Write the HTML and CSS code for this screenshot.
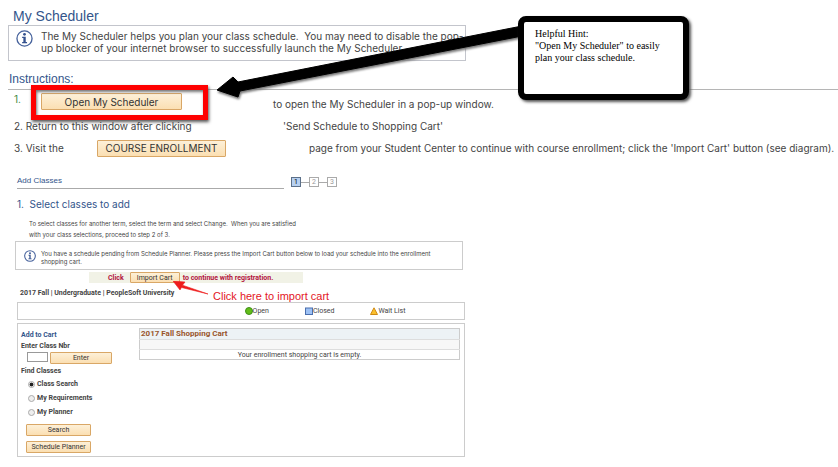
FILE: index.html
```
<!DOCTYPE html>
<html lang="en">

<head>
    <meta charset="UTF-8">
    <title>My Scheduler</title>
    <link rel="stylesheet" href="styles.css">
</head>

<body>
    <main class="page">
        <h1 class="page-title">My Scheduler</h1>
        <div class="info-box">
            <svg class="info-icon" viewBox="0 0 18 18">
                <circle cx="9" cy="9" r="8" fill="#fff" stroke="#46629c" stroke-width="1.4" />
                <circle cx="9" cy="4.6" r="1.5" fill="#35528f" />
                <path d="M6.5 7.2H10.3V12.6H11.7V13.9H6.5V12.6H7.8V8.5H6.5Z" fill="#35528f" />
            </svg>
            <p>The My Scheduler helps you plan your class schedule.&nbsp; You may need to disable the pop-up blocker of your internet browser to successfully launch the My Scheduler.</p>
        </div>

        <h2 class="section-title">Instructions:</h2>
        <ol class="steps">
            <li class="step">
                <span class="num">1.</span>
                <span class="slot"><button class="btn open-btn">Open My Scheduler</button></span>
                <span>to open the My Scheduler in a pop-up window.</span>
            </li>
            <li class="step">
                <span class="lead">2. Return to this window after clicking</span>
                <span>'Send Schedule to Shopping Cart'</span>
            </li>
            <li class="step">
                <span class="visit">3. Visit the</span>
                <span class="enroll"><button class="btn enroll-btn">COURSE ENROLLMENT</button></span>
                <span>page from your Student Center to continue with course enrollment; click the 'Import Cart' button (see diagram).</span>
            </li>
        </ol>

        <section class="diagram">
            <div class="diagram-head">
                <h3 class="diagram-title">Add Classes</h3>
                <div class="progress">
                    <span class="dot current">1</span>
                    <span class="dot">2</span>
                    <span class="dot">3</span>
                </div>
            </div>
            <h4 class="diagram-step">1.&nbsp; Select classes to add</h4>
            <p class="diagram-text">To select classes for another term, select the term and select Change.&nbsp; When you are satisfied with your class selections, proceed to step 2 of 3.</p>

            <div class="notice">
                <svg class="notice-icon" viewBox="0 0 18 18">
                    <circle cx="9" cy="9" r="8" fill="#fff" stroke="#46629c" stroke-width="1.6" />
                    <circle cx="9" cy="4.8" r="1.4" fill="#35528f" />
                    <path d="M6.8 7.2H10V12.6H11.5V13.9H6.5V12.6H8V8.5H6.8Z" fill="#35528f" />
                </svg>
                <p>You have a schedule pending from Schedule Planner. Please press the Import Cart button below to load your schedule into the enrollment shopping cart.</p>
            </div>

            <div class="import-bar">
                <span>Click</span>
                <button class="btn import-btn">Import Cart</button>
                <span>to continue with registration.</span>
                <svg class="red-arrow" viewBox="0 0 36 16">
                    <path d="M0 0L12 1L9.500 4.200L35 13L8.500 6.500L7 9Z" fill="#ee1c1c" stroke="#ee1c1c" stroke-width=".6" />
                </svg>
            </div>
            <div class="term-row">
                <strong>2017 Fall | Undergraduate | PeopleSoft University</strong>
                <span class="click-here">Click here to import cart</span>
            </div>

            <div class="legend">
                <span class="key"><svg viewBox="0 0 8 8"><circle cx="4" cy="4" r="3.500" fill="#62bd19" stroke="#3f8f18" /></svg>Open</span>
                <span class="key"><svg viewBox="0 0 8 8"><rect x=".5" y="1" width="7" height="6.500" fill="#9dc1f5" stroke="#4a6fae" /></svg>Closed</span>
                <span class="key"><svg viewBox="0 0 8 8"><path d="M4 .8L7.500 7.500H.5Z" fill="#fbc02d" stroke="#cf8a14" /></svg>Wait List</span>
            </div>

            <div class="cart-panel">
                <form class="cart-form">
                    <div class="add-title">Add to Cart</div>
                    <label class="label" for="nbr">Enter Class Nbr</label>
                    <div class="enter-row">
                        <input class="nbr" id="nbr" type="text">
                        <button class="btn enter-btn" type="button">Enter</button>
                    </div>
                    <div class="label find">Find Classes</div>
                    <label class="choice"><input type="radio" name="find" checked>Class Search</label>
                    <label class="choice"><input type="radio" name="find">My Requirements</label>
                    <label class="choice"><input type="radio" name="find">My Planner</label>
                    <button class="btn side-btn" type="button">Search</button>
                    <button class="btn side-btn" type="button">Schedule Planner</button>
                </form>
                <table class="cart">
                    <thead>
                        <tr><th>2017 Fall Shopping Cart</th></tr>
                    </thead>
                    <tbody>
                        <tr class="cols"><td></td></tr>
                        <tr><td>Your enrollment shopping cart is empty.</td></tr>
                    </tbody>
                </table>
            </div>
        </section>

        <!-- hint drawn over the page -->
        <div class="highlight"></div>
        <svg class="arrow" viewBox="0 0 310 90">
            <path d="M306 9L22 65L17 60L1 73L22 80L24 74L306 19Z" fill="#000" stroke="#000" stroke-linejoin="round" />
        </svg>
        <aside class="hint">Helpful Hint:<br>"Open My Scheduler" to easily plan your class schedule.</aside>
    </main>
</body>

</html>
```
FILE: styles.css
```
*{
    box-sizing: border-box;
}

body{
    margin: 0;
    background-color: #fff;
    color: #444;
    font-family: Inter, "Liberation Sans", Arial, sans-serif;
    font-size: 10px;
    line-height: 12px;
}

h1, h2, h3, h4, p, ol{
    margin: 0;
    padding: 0;
    font-weight: normal;
}

.page{
    position: relative;
    padding: 8px 0 8px 8px;
}

.page-title, .section-title, .diagram-title, .click-here{
    font-family: "Liberation Sans", Arial, sans-serif;
}

.page-title{
    padding-left: 5px;
    font-size: 14px;
    line-height: 17px;
    color: #33558b;
}

.info-box{
    display: flex;
    gap: 8px;
    max-width: 458px;
    min-height: 36px;
    padding: 4px 0 4px 7px;
    border: 1px solid #c3c5cc;
}

.info-icon{
    flex: none;
    width: 17px;
    height: 17px;
}

.section-title{
    margin-top: 11px;
    padding: 0 0 2px 1px;
    border-bottom: 1px solid #b5b5b5;
    font-size: 12px;
    line-height: 15px;
    color: #33558b;
}

.steps{
    list-style: none;
    padding: 3px 0 0 6px;
}

.step{
    display: flex;
    align-items: center;
    min-height: 22px;
}

.num{
    flex: none;
    align-self: flex-start;
    width: 27px;
    color: #3f8a3f;
}

.slot{
    flex: none;
    align-self: flex-start;
    width: 232px;
}

.lead{
    flex: none;
    width: 269px;
}

.visit{
    flex: none;
    width: 83px;
}

.enroll{
    flex: none;
    width: 212px;
}

.btn{
    display: block;
    padding: 0;
    border: 1px solid #d9a766;
    border-radius: 1px;
    background: linear-gradient(#fdf0d8, #fbdfb2);
    color: #333;
    font-family: inherit;
    cursor: pointer;
}

.open-btn{
    width: 141px;
    height: 17px;
    font-size: 10px;
}

.enroll-btn{
    width: 129px;
    height: 17px;
    font-size: 10px;
}

.diagram{
    max-width: 457px;
    margin-top: 17px;
    padding-left: 9px;
    font-family: Roboto, "Liberation Sans", Arial, sans-serif;
    font-size: 7px;
    line-height: 8px;
}

.diagram-head{
    display: flex;
    gap: 7px;
}

.diagram-title{
    width: 267px;
    padding-bottom: 2px;
    border-bottom: 1px solid #aaa;
    font-size: 8px;
    line-height: 10px;
    color: #33558b;
}

.progress{
    display: flex;
    gap: 8px;
    padding-top: 1px;
    background: linear-gradient(#aaa, #aaa) 0 6px / 100% 1px no-repeat;
}

.dot{
    width: 10px;
    height: 10px;
    border: 1px solid #aaa;
    background-color: #fff;
    color: #999;
    text-align: center;
}

.dot.current{
    border-color: #5c7089;
    background-color: #b6d0f0;
    color: #000;
}

.diagram-step{
    margin-top: 8px;
    font-family: Inter, "Liberation Sans", Arial, sans-serif;
    font-size: 10px;
    line-height: 14px;
    color: #33558b;
}

.diagram-text, .notice{
    font-family: Inter, "Liberation Sans", Arial, sans-serif;
    font-size: 6px;
}

.diagram-text{
    max-width: 288px;
    margin-top: 7px;
    padding-left: 12px;
    line-height: 11px;
}

.notice{
    display: flex;
    gap: 5px;
    min-height: 29px;
    margin: 1px 2px 0 -2px;
    padding: 8px 8px 3px 8px;
    border: 1px solid #ccc;
}

.notice-icon{
    flex: none;
    width: 12px;
    height: 12px;
}

.import-bar{
    position: relative;
    display: flex;
    gap: 3px;
    align-items: center;
    width: 214px;
    height: 11px;
    margin: 2px 0 0 72px;
    padding-left: 19px;
    background-color: #f1f2e6;
    color: #b3123d;
    font-weight: bold;
}

.import-btn{
    width: 50px;
    height: 11px;
    margin-left: 3px;
    font-size: 7px;
    line-height: 8px;
}

.red-arrow{
    position: absolute;
    left: 84px;
    top: 9px;
    width: 36px;
    height: 16px;
}

.term-row{
    display: flex;
    height: 19px;
    padding: 6px 0 0 3px;
}

.term-row strong{
    flex: none;
    width: 193px;
}

.click-here{
    color: #e3161e;
    font-size: 11px;
    line-height: 14px;
}

.legend{
    display: flex;
    gap: 36px;
    align-items: center;
    justify-content: center;
    height: 18px;
    padding-left: 168px;
    border: 1px solid #ccc;
}

.key{
    display: flex;
    align-items: center;
}

.key svg{
    width: 8px;
    height: 8px;
}

.cart-panel{
    display: flex;
    align-items: flex-start;
    min-height: 134px;
    margin-top: 3px;
    padding: 4px 4px 2px 3px;
    border: 1px solid #ccc;
}

.cart-form{
    flex: none;
    width: 118px;
    padding-top: 2px;
    font-weight: bold;
}

.add-title{
    line-height: 10px;
    color: #33558b;
}

.label{
    display: block;
    line-height: 12px;
}

.enter-row{
    display: flex;
    gap: 2px;
    padding-left: 6px;
}

.nbr{
    width: 21px;
    height: 10px;
    padding: 0;
    border: 1px solid #999;
    font-size: 7px;
}

.enter-btn{
    width: 62px;
    height: 12px;
    font-size: 7px;
    line-height: 8px;
}

.find{
    margin-top: 1px;
}

.choice{
    display: flex;
    align-items: center;
    gap: 2px;
    height: 14px;
    padding-left: 7px;
}

.choice input{
    appearance: none;
    width: 7px;
    height: 7px;
    margin: 0;
    border: 1px solid #aaa;
    border-radius: 50%;
    background-color: #eee;
}

.choice input:checked{
    background: radial-gradient(#222 50%, #eee 60%);
}

.side-btn{
    width: 65px;
    height: 12px;
    margin: 5px 0 0 5px;
    font-size: 7px;
    line-height: 8px;
}

.cart{
    flex: 1;
    border-collapse: collapse;
    border: 1px solid #ccc;
}

.cart th{
    height: 10px;
    padding: 0 1px;
    background-color: #edf2f5;
    color: #99552b;
    font-size: 8px;
    line-height: 10px;
    text-align: left;
}

.cart td{
    height: 10px;
    padding: 0;
    border-top: 1px solid #ddd;
    text-align: center;
}

.cart .cols{
    background-color: #f7f7f7;
}

.highlight{
    position: absolute;
    left: 31px;
    top: 85px;
    width: 177px;
    height: 35px;
    border: 5px solid #fe0000;
    box-shadow: 1px 2px 3px #555, inset 1px 2px 3px #777;
}

.arrow{
    position: absolute;
    left: 216px;
    top: 17px;
    width: 310px;
    height: 90px;
    filter: drop-shadow(1px 2px 1px #777);
}

.hint{
    position: absolute;
    left: 518px;
    top: 16px;
    width: 171px;
    height: 84px;
    padding: 6px 11px;
    border: 6px solid #000;
    border-radius: 8px;
    background-color: #fff;
    box-shadow: 2px 2px 3px #555;
    color: #000;
    font-family: "Liberation Serif", "Times New Roman", serif;
    font-size: 10px;
}
```
